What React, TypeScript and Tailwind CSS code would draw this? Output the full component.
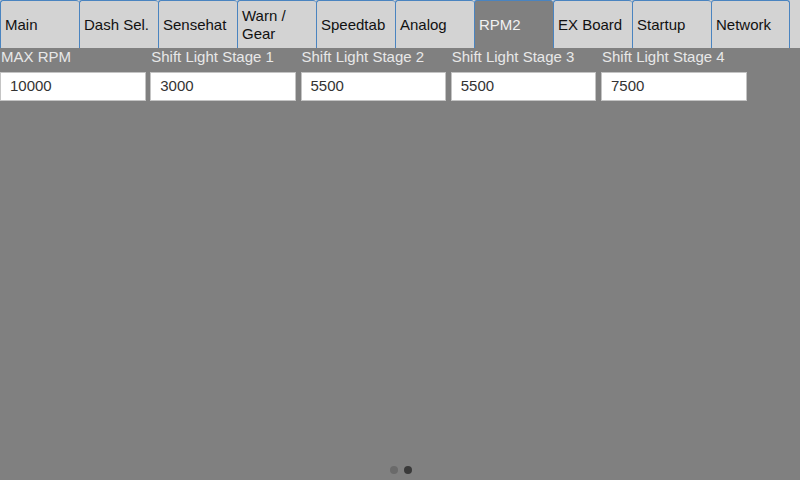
import React from "react";

const tabs = ["Main", "Dash Sel.", "Sensehat", "Warn / Gear", "Speedtab", "Analog", "RPM2", "EX Board", "Startup", "Network"];
const fields = [
  { label: "MAX RPM", value: "10000" },
  { label: "Shift Light Stage 1", value: "3000" },
  { label: "Shift Light Stage 2", value: "5500" },
  { label: "Shift Light Stage 3", value: "5500" },
  { label: "Shift Light Stage 4", value: "7500" },
];

export default function App() {
  return (
    <div
      className="w-[800px] h-[480px] bg-[#808080] flex flex-col overflow-hidden"
      style={{ fontFamily: '"Liberation Sans", Arial, sans-serif' }}
    >
      <div className="flex h-[48px] bg-[#d3d3d3] shrink-0">
        {tabs.map((t, i) => {
          const active = t === "RPM2";
          return (
            <div
              key={t}
              className={
                "w-[79px] h-[48px] flex items-center pl-[4px] pr-[2px] text-[15px] leading-[18px] border-t border-l border-[#4a84c0] rounded-t-[3px] " +
                (i === tabs.length - 1 ? "border-r " : "") +
                (active ? "bg-[#808080] text-[#f2f2f2]" : "bg-[#d3d3d3] text-[#111111]")
              }
            >
              {t === "Warn / Gear" ? (
                <span>
                  Warn /<br />
                  Gear
                </span>
              ) : (
                <span>{t}</span>
              )}
            </div>
          );
        })}
      </div>
      <div className="flex">
        {fields.map((f) => (
          <div key={f.label} className="w-[150.25px] flex flex-col shrink-0">
            <div className="h-[18px] text-[15px] leading-[18px] text-[#e8e8e8] pl-[1px] whitespace-nowrap">{f.label}</div>
            <div className="mt-[6px] w-[145.5px] h-[29px] bg-white border border-[#c4c4c4] flex items-center pl-[9px] text-[15px] text-[#333333]">
              {f.value}
            </div>
          </div>
        ))}
      </div>
      <div className="flex-1" />
      <div className="flex justify-center gap-[6px] pb-[6px] pl-[1px]">
        <div className="w-[8px] h-[8px] rounded-full bg-[#6a6a6a]" />
        <div className="w-[8px] h-[8px] rounded-full bg-[#3a3a3a]" />
      </div>
    </div>
  );
}
